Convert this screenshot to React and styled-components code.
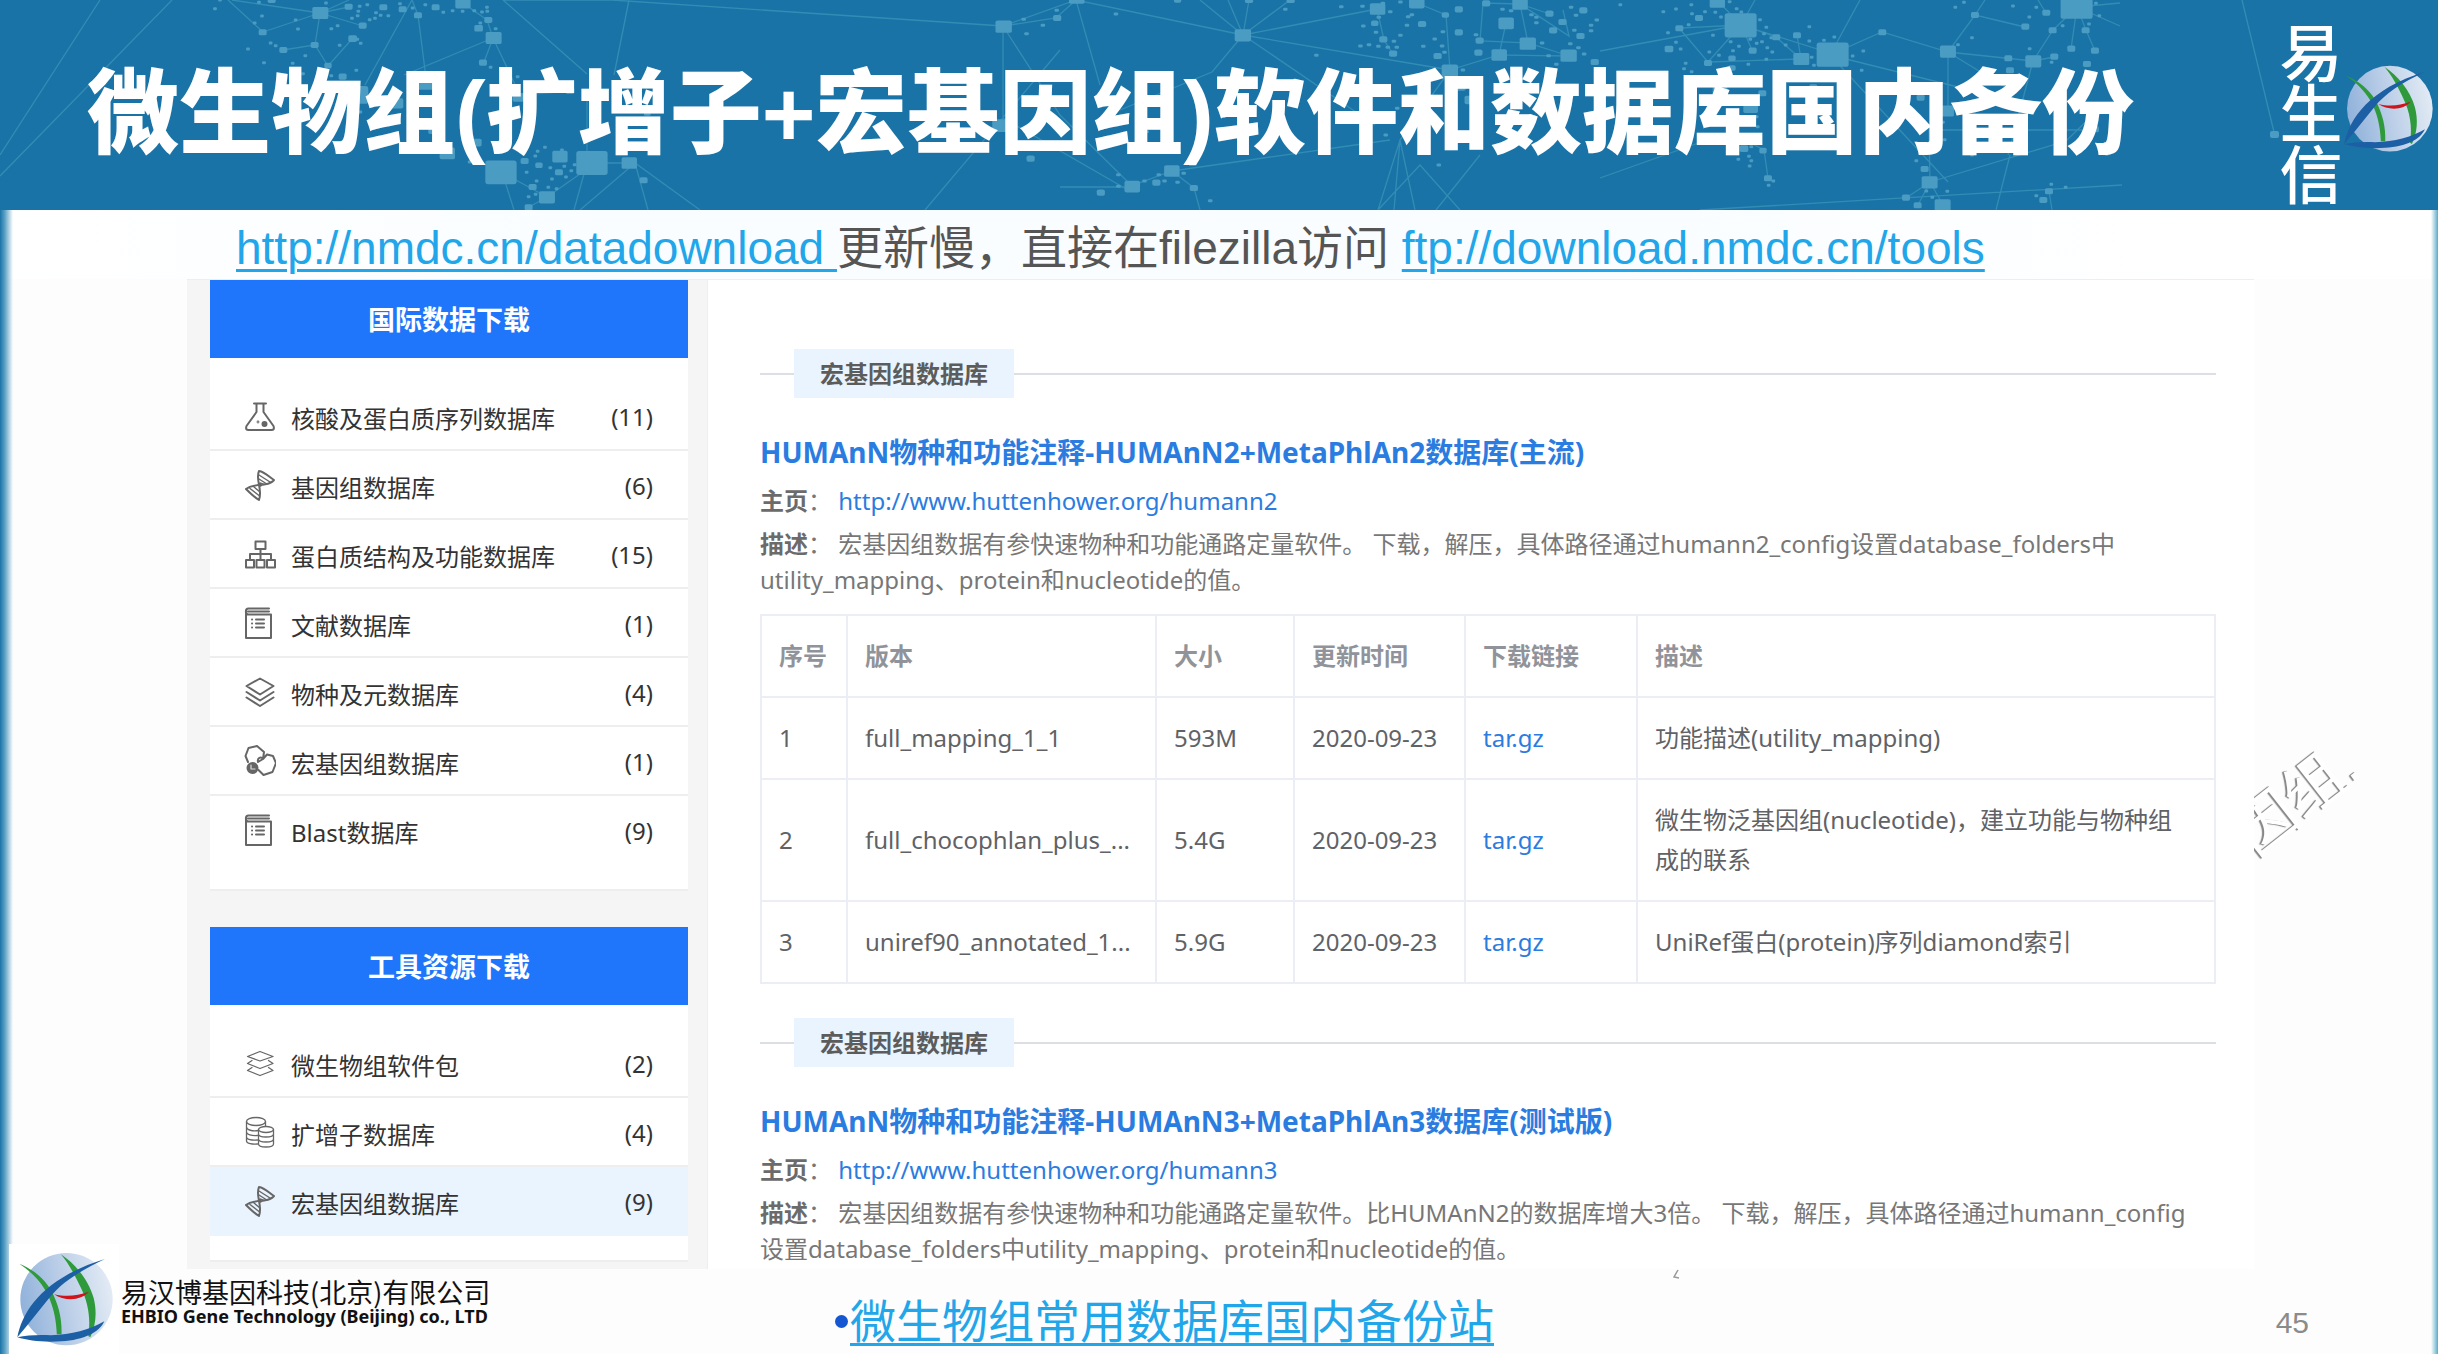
import React from "react";
import styled, { createGlobalStyle } from "styled-components";

const Global = createGlobalStyle`
  *, *::before, *::after { box-sizing: border-box; }
  body { margin: 0; background: #fff; }
  h1, h2, h3, p, ul { margin: 0; padding: 0; }
  ul { list-style: none; }
  a { text-decoration: none; }
`;

const web = `"Noto Sans", "Noto Sans CJK SC", sans-serif`;
const slideFont = `"Liberation Sans", "Noto Sans CJK SC", sans-serif`;

const Slide = styled.div`
  position: relative;
  display: flex;
  flex-direction: column;
  min-height: 100vh;
  font-family: ${slideFont};
  background:
    linear-gradient(90deg, #1a73a6 0, #5fa3c6 5px, #ffffff00 13px),
    linear-gradient(270deg, #5fa9c6 0, #9fd0e0 3px, #ffffff00 7px),
    linear-gradient(90deg, #fff 0, #f9fdff 26%, #f9fdff 66%, #fff 90%) 0 210px / 100% 69px no-repeat,
    #fdfdfe;
`;

const Header = styled.header`
  position: relative;
  display: flex;
  align-items: center;
  justify-content: space-between;
  height: 210px;
  padding: 0 5px 0 87px;
  overflow: hidden;
  background: #1a73a6;
`;

const Network = styled.svg`
  position: absolute;
  inset: 0;
  width: 100%;
  height: 100%;
`;

const Title = styled.h1`
  position: relative;
  color: #fff;
  font-size: 92px;
  line-height: 120px;
  font-weight: 900;
  white-space: nowrap;
  padding-top: 18px;
`;

const HeaderMark = styled.div`
  position: relative;
  display: flex;
  align-items: center;
  padding-top: 8px;
`;

const VerticalName = styled.p`
  width: 64px;
  padding-top: 12px;
  color: #fff;
  font-size: 63px;
  line-height: 61px;
  font-weight: 500;
  text-align: center;
`;

const Logo = styled.svg`
  display: block;
  flex: none;
  width: ${(p) => p.$size}px;
  height: ${(p) => p.$size}px;
`;

const Lead = styled.p`
  padding-left: 236px;
  height: 69px;
  color: #555;
  font-size: 46px;
  line-height: 76px;
  white-space: pre;
`;

const SlideLink = styled.a`
  color: #22a6ea;
  text-decoration: underline;
  text-decoration-thickness: 3px;
  text-underline-offset: 5px;
`;

const Page = styled.main`
  display: flex;
  margin: 0 184px 0 187px;
  background: #f5f5f5;
  border-top: 1px solid #eee;
  font-family: ${web};
`;

const Sidebar = styled.aside`
  display: flex;
  flex-direction: column;
  flex: none;
  gap: 36px;
  width: 521px;
  padding: 0 19px 7px 23px;
  border-right: 1px solid #eee;
`;

const Card = styled.nav`
  background: #fff;
  border-bottom: 2px solid #eee;
`;

const CardTitle = styled.h2`
  height: 78px;
  color: #fff;
  background: #1f76fb;
  font-size: 27px;
  line-height: 80px;
  font-weight: 700;
  text-align: center;
`;

const Menu = styled.ul`
  padding: 24px 0;
`;

const MenuItem = styled.li`
  border-bottom: 2px solid #eee;
  background: ${(p) => (p.$active ? "#e9f4fe" : "#fff")};
  &:last-child { border-bottom-color: transparent; }
`;

const MenuLink = styled.a`
  display: flex;
  align-items: center;
  height: 67px;
  padding: 0 35px 0 34px;
  color: #333;
  font-size: 24px;
`;

const MenuLabel = styled.span`
  flex: 1;
  padding: 4px 0 0 15px;
`;

const MenuCount = styled.span`
  padding-top: 2px;
`;

const Icon = styled.svg`
  width: 32px;
  height: 32px;
  fill: none;
  stroke: #666;
  stroke-width: ${(p) => p.$thin ? 1.3 : 2};
  stroke-linejoin: round;
  stroke-linecap: round;
`;

const Content = styled.div`
  flex: 1;
  min-width: 0;
  padding: 69px 38px 0 52px;
  background: #fff;
`;

const Section = styled.section`
  margin-bottom: 34px;
  &:last-child { margin-bottom: 0; }
`;

const Divider = styled.div`
  display: flex;
  align-items: center;
  &::before, &::after { content: ""; height: 2px; background: #dcdfe6; }
  &::before { width: 34px; }
  &::after { flex: 1; }
`;

const Tag = styled.span`
  padding: 0 26px;
  color: #5c5c5c;
  background: #e9f4fe;
  font-size: 24px;
  line-height: 49px;
  font-weight: 700;
`;

const Heading = styled.h3`
  margin-top: 34px;
  color: #2b7ce0;
  font-size: 28px;
  line-height: 40px;
  font-weight: 700;
`;

const Info = styled.p`
  margin-top: ${(p) => p.$gap}px;
  padding-right: 20px;
  color: #777;
  font-size: 24px;
  line-height: 36px;
`;

const Key = styled.b`
  color: #6b6b6b;
`;

const TextLink = styled.a`
  color: #2b7ce0;
`;

const Table = styled.table`
  width: 100%;
  margin-top: 16px;
  border-collapse: collapse;
  table-layout: fixed;
  color: #606266;
  font-size: 24px;
  line-height: 40px;
  th, td {
    padding: 20px 17px;
    border: 2px solid #ebeef5;
    text-align: left;
    font-weight: 400;
  }
  td:last-child { padding-right: 32px; }
  td:nth-child(2) { padding-right: 0; white-space: nowrap; }
  th { color: #909399; font-weight: 700; }
`;

const Col = styled.col`
  width: ${(p) => p.$w}px;
`;

const Footer = styled.footer`
  display: grid;
  grid-template-columns: 835px 1fr auto;
  align-items: center;
  flex: 1;
  min-height: 84px;
  padding-right: 129px;
`;

const Brand = styled.div`
  display: flex;
  align-items: center;
  align-self: end;
  width: 500px;
  height: 110px;
  margin: -26px 0 0 9px;
  padding-left: 7px;
  background: linear-gradient(90deg, #fff 0 110px, transparent 110px);
`;

const Company = styled.div`
  padding: 8px 0 0 8px;
  color: #111;
  white-space: nowrap;
`;

const CompanyCn = styled.p`
  font-size: 27px;
  line-height: 26px;
  font-weight: 400;
  font-family: "Noto Sans CJK SC", sans-serif;
`;

const CompanyEn = styled.p`
  font-family: "Noto Sans", sans-serif;
  font-size: 18px;
  line-height: 22px;
  font-weight: 700;
`;

const Source = styled.p`
  display: flex;
  align-items: center;
  font-size: 46px;
  line-height: 60px;
  padding-top: 20px;
`;

const Bullet = styled.span`
  width: 13px;
  height: 13px;
  margin-right: 2px;
  border-radius: 50%;
  background: #1557d0;
`;

const PageNumber = styled.span`
  padding-top: 22px;
  color: #8b8b8b;
  font-size: 30px;
  line-height: 34px;
`;

const Watermark = styled.div`
  position: absolute;
  top: 740px;
  right: 64px;
  width: 120px;
  height: 140px;
  overflow: hidden;
  span {
    position: absolute;
    right: 8px;
    top: 28px;
    color: #fff;
    font-size: 60px;
    line-height: 64px;
    white-space: nowrap;
    text-shadow: -2px -1px 1px #888, -1px -1px 0 #aaa;
    transform: rotate(-38deg);
  }
`;

const Speck = styled.svg`
  position: absolute;
  top: 1269px;
  left: 1673px;
  width: 10px;
  height: 10px;
`;

/* Nodes are [centre x, centre y, width]; every area has its own grid. */
const areas = [
  {
    t: "translate(140 0) scale(.3333)", r: 0.76,
    nodes: [[541,39,48],[368,97,24],[430,150,24],[524,135,24],[638,116,26],[668,77,24],[626,20,24],[730,22,24],[788,28,24],[834,46,24],[887,22,24],[969,8,46],[1045,60,24],[1016,85,26],[1061,114,48],[1029,188,24],[564,197,22],[608,230,24],[650,285,70],[770,310,40],[858,250,50],[1290,272,26],[1135,292,34],[922,460,46],[1010,428,30],[1083,517,94],[1154,483,24],[1197,496,22],[1260,470,46],[1356,489,94],[1257,517,24],[1468,489,46],[1511,541,24],[1178,561,24],[1221,592,48],[1166,622,24],[395,0,24],[878,392,26],[1522,340,20]],
    dots: [[225,26],[240,0],[324,147],[344,69],[366,48],[357,7],[392,129],[407,137],[372,188],[458,190],[467,60],[474,87],[574,86],[593,77],[636,55],[653,47],[655,34],[659,19],[682,14],[689,59],[705,55],[708,38],[722,46],[745,47],[652,118],[662,130],[599,136],[496,167],[558,9],[649,211],[574,227],[489,221],[780,11],[818,24],[856,14],[910,37],[938,32],[968,34],[1003,32],[1026,36],[1041,22],[1042,34],[1021,69],[1067,86],[1052,202],[1133,230],[1186,468],[1193,454],[1215,442],[1266,450],[1160,517],[1190,543],[1187,583],[1166,590],[1225,562],[1250,566],[1236,537],[1231,503],[1273,499],[1294,512],[1278,531],[1304,494],[989,486],[661,336],[643,348]],
  },
  {
    t: "translate(960 0) scale(.4082 .3333)", r: 0.92,
    nodes: [[107,80,40],[286,-6,38],[238,54,20],[693,106,40],[1023,27,38],[1119,8,38],[1189,45,18],[1222,28,20],[1289,10,20],[1372,12,38],[1444,41,20],[1338,70,38],[1476,66,20],[1527,31,20],[1016,70,18],[1132,72,20],[1037,118,20],[1061,161,20],[1222,97,20],[1273,122,20],[1270,158,20],[1321,165,38],[1391,131,40],[1453,91,20],[1520,108,20],[1491,167,40],[1555,186,20],[1170,168,20],[1200,212,40],[100,377,42],[173,476,20],[345,578,20],[422,560,38],[481,548,20],[519,513,38],[573,564,20],[570,489,20],[708,0,20],[533,0,18],[810,0,20],[1226,260,26],[1250,300,28]],
    dots: [[237,31],[156,58],[203,76],[163,101],[382,42],[797,28],[934,20],[986,19],[1036,10],[1054,35],[988,78],[1026,52],[1019,97],[981,138],[1002,134],[1025,139],[1048,142],[1070,142],[1063,124],[1079,106],[1098,50],[1107,44],[1095,76],[1079,6],[1135,139],[1163,117],[1181,138],[1183,95],[1187,157],[1264,104],[1329,28],[1350,32],[1400,44],[1412,52],[1412,68],[1426,129],[1442,167],[1497,22],[1509,46],[1546,76],[1546,92],[1560,60],[1505,91],[1515,143],[1495,131],[1529,162],[1461,193],[873,166],[613,602],[388,524],[388,559],[452,543],[501,543],[487,524],[533,547],[548,520],[1173,495],[1043,405],[1071,325],[457,395],[1232,210]],
  },
  {
    t: "translate(1600 0) scale(.3333)", r: 0.76,
    nodes: [[352,6,46],[297,54,24],[238,85,24],[422,76,96],[207,147,26],[324,189,24],[396,175,22],[396,204,22],[458,152,24],[529,112,24],[591,106,24],[604,177,48],[698,164,96],[847,97,24],[1044,155,48],[1125,45,24],[1276,80,24],[1339,38,24],[1358,91,24],[1430,20,96],[1457,91,24],[1414,146,24],[1485,152,24],[1461,192,24],[1300,184,48],[1363,170,24],[1225,175,24],[1230,211,24],[962,293,24],[1040,333,44],[452,322,44],[432,446,26],[504,535,24],[489,452,22],[974,507,24],[989,547,48],[918,593,24],[953,616,24],[1028,616,48],[1347,574,24],[1330,600,24],[1485,388,24],[487,280,24],[640,262,24],[360,270,44]],
    dots: [[61,14],[190,35],[228,27],[274,14],[276,41],[315,35],[346,37],[363,51],[389,5],[410,26],[424,36],[266,74],[204,98],[228,127],[242,147],[339,106],[392,125],[417,139],[399,152],[328,156],[357,166],[451,118],[470,130],[486,125],[502,143],[517,156],[499,178],[480,59],[499,82],[492,101],[514,113],[557,135],[628,80],[628,123],[672,121],[703,111],[642,196],[635,172],[758,168],[790,153],[785,211],[1066,22],[1092,7],[1116,113],[1074,134],[1239,18],[1288,51],[1309,22],[1289,146],[1355,187],[1388,77],[1467,72],[1498,47],[1488,10],[445,193],[257,190],[252,206],[275,215],[1029,367],[1034,419],[949,482],[1042,574],[997,592],[979,573],[1354,553],[1397,562],[1309,587],[415,478],[447,469],[454,482],[449,498],[454,440],[473,380],[470,350],[506,556],[520,543],[1520,463],[1116,465]],
  },
];

const lines = [
  "M100 0L0 155M172 0L0 176M228 0L263 32M320 13L263 32M320 13L232 0M320 13L349 7M320 13L315 45L283 50M320 13L363 26M320 13L349 0M315 45L328 66L352 39M418 15L412 0L365 85M493 38L404 75M493 38L484 62M493 38L520 95L571 91M503 0L587 74M629 0L614 75M503 0L612 0M418 15L426 78M463 3L487 20L493 38",
  "M612 0L1003 26L1076 0M1003 26L1056 18L1076 0M1003 26L1003 118L1128 190M1003 26L1060 115L1132 186M1076 0L1100 85M1076 0L1243 35M1060 50L925 210M1243 35L1200 0M1243 35L1228 0M1243 35L1249 0M1243 35L1290 0M1243 35L1377 9M1243 35L1212 72L1120 110M1243 35L1450 70M1243 35L1375 125M1377 9L1384 40L1393 54M1450 70L1446 15L1417 3M1450 70L1499 55L1569 56L1528 43L1480 41L1483 3L1520 4L1528 43M1520 4L1569 36L1563 10M1506 23L1499 55M1520 4L1550 14M1450 70L1400 140L1378 210M1400 140L1394 210M1400 140L1415 210M1460 210L1420 165L1378 210M1060 187L1128 187L1172 171L1194 188L1200 210M1172 171L1390 140M1480 155L1436 210",
  "M502 172L514 210M587 163L574 210M587 163L635 163L700 210M635 163L648 210M635 163L580 210M501 172L547 197L529 207M547 197L600 160M587 163L587 90",
  "M1741 25L1679 28L1708 62L1741 25M1741 25L1752 50M1741 25L1776 37L1801 59L1709 62M1741 25L1717 0M1741 25L1755 0M1741 25L1830 53M1797 35L1801 59M1600 51L1741 25M1830 55L1882 32L1948 52L1975 15L2025 27M1975 15L1985 0M1830 55L1860 0M1830 55L1948 182M1830 55L1990 95M1948 52L1948 110M1948 52L2033 61L2054 57M1948 52L2010 90M2077 7L2053 30L2033 61M2077 7L2086 30L2095 51M2077 7L2071 49M2077 7L2120 26M2077 7L2120 3M2046 13L2038 0M1600 178L1735 130M1735 135L1764 150L1768 178M1930 182L1906 198M1930 182L1918 205M1930 182L1943 205M1930 182L1929 130L2095 130M1930 182L2066 141L2098 110M2010 155L1996 210M1700 210L2122 185M2033 61L2008 155M2049 191L2052 210M2242 0L2274 132",
];

function NetworkArt() {
  return (
    <Network viewBox="0 0 2438 210" preserveAspectRatio="xMidYMid slice" aria-hidden="true">
      <g stroke="#3b96ba" strokeWidth="1.3" fill="none" opacity=".75">
        {lines.map((d) => <path key={d} d={d} />)}
      </g>
      <g fill="#4a9cc2">
        {areas.map((a) => (
          <g key={a.t} transform={a.t}>
            {a.nodes.map(([x, y, w], i) => (
              <rect key={i} x={x - w / 2} y={y - (w * a.r) / 2} width={w} height={w * a.r} rx={w > 60 ? 8 : 5} />
            ))}
            {a.dots.map(([x, y], i) => (
              <rect key={i} x={x - 5.5} y={y - 4.5} width="11" height="9" rx="3" />
            ))}
          </g>
        ))}
        <rect x="2270" y="131" width="9" height="7" rx="2" />
      </g>
    </Network>
  );
}

function Globe({ size, id, wedge }) {
  return (
    <Logo $size={size} viewBox="46 96 290 290" role="img" aria-label="EHBIO">
      <defs>
        <linearGradient id={id} x1="0" y1=".6" x2="1" y2=".4">
          <stop offset="0" stopColor="#8fb1da" />
          <stop offset=".5" stopColor="#bccfe8" />
          <stop offset="1" stopColor="#e3ebf5" />
        </linearGradient>
      </defs>
      <circle cx="197" cy="240" r="138" fill={`url(#${id})`} />
      {wedge && <path d="M52 353L72 326L106 347Z" fill="#fff" />}
      <path d="M56 134C96 150 130 178 150 212C174 256 184 300 182 345L168 345C166 296 156 252 134 214C114 180 88 156 56 134Z" fill="#2f9a3b" />
      <path d="M180 106C222 134 262 180 278 236C288 276 286 316 268 354L262 350C270 300 262 250 240 206C224 172 204 134 180 106Z" fill="#2f9a3b" />
      <path d="M160 225C196 234 228 230 264 218C240 246 190 246 160 225Z" fill="#d0141c" />
      <path d="M50 354C66 272 130 176 312 120C236 156 182 190 146 236C112 278 82 316 50 354Z" fill="#1d5fa4" />
      <path d="M50 354C80 348 110 346 150 348C212 346 266 332 310 306C296 338 250 362 182 366C128 370 84 364 50 354Z" fill="#1d5fa4" />
    </Logo>
  );
}

const icons = {
  flask: (
    <>
      <path d="M10 3.500h12M12.500 4v8L2.500 26c-1 3 0 4 2 4h23c2 0 3-1 2-4L19.500 12V4" />
      <circle cx="20.500" cy="24" r="2" fill="#666" />
      <circle cx="14" cy="22" r=".4" />
    </>
  ),
  dna: (
    <>
      <path d="M15 2c-4 9 4 18 0 29M15 2c6 1 10 6 15 9-5 6-10 3-14 6M2 20c6-5 9-2 14-5M2 20c4 4 8 8 13 11" />
      <path d="M15 6l11 7M15 10l7 4.500M6 19.500l9 7M10 18l6 5M16 14l4 1.500" strokeWidth="1.400" />
    </>
  ),
  sitemap: (
    <path d="M11.500 3.500h10v7.500h-10zM2 22h8v7.500H2zM12.500 22h8v7.500h-8zM23 22h8v7.500h-8zM16.500 11v11M6 22v-6h21v6" />
  ),
  book: (
    <>
      <path d="M25 1.500H4.500C1 1.500 1 7.500 4.500 7.500H27V31H2V4.500M4 4.500h21" />
      <path d="M12 12.500h8M12 16.500h8M12 20.500h8M8 12.500h.1M8 16.500h.1M8 20.500h.1" />
    </>
  ),
  layers: (
    <path d="M16 2.500L29.500 10 16 18.500 2.500 10zM2.500 16L16 24.500 29.500 16M2.500 21.500L16 30 29.500 21.500" />
  ),
  hexagons: (
    <>
      <path d="M4 17L1.500 11l3-8L13 1l7 6-1 7-5 3M14 17c-1-4 3-6 5-3l4-4.500 6 1.500 3 7-3.500 9-9 3-5-5" />
      <circle cx="8.500" cy="23" r="5" fill="#666" />
      <path d="M7 20v4h4" stroke="#ddd" strokeWidth="1.200" />
    </>
  ),
  stack: (
    <path d="M16 4.500L29 9.500 16 14 3.500 9.500zM8 13.500l-4.500 3L16 21.500l13-5-4.500-3M8 20.500l-4.500 3L16 28.500l13-5-4.500-3" />
  ),
  coins: (
    <>
      <ellipse cx="12" cy="5.500" rx="9.500" ry="4" />
      <path d="M2.500 5.500V25c0 2.500 6 3.500 11 3M21.500 5.500V10M2.500 11c0 3 6 4.500 12 3.500M2.500 16c0 2.500 5 4 11 3.500M2.500 21c0 2.500 5 3.500 11 3" />
      <ellipse cx="22" cy="13.500" rx="7.500" ry="3" />
      <path d="M14.500 13.500V28c0 4 15 4 15 0V13.500M14.500 18c0 4 15 4 15 0M14.500 23c0 4 15 4 15 0" />
    </>
  ),
};

const groups = [
  {
    title: "国际数据下载",
    items: [
      ["flask", "核酸及蛋白质序列数据库", 11],
      ["dna", "基因组数据库", 6],
      ["sitemap", "蛋白质结构及功能数据库", 15],
      ["book", "文献数据库", 1],
      ["layers", "物种及元数据库", 4],
      ["hexagons", "宏基因组数据库", 1],
      ["book", "Blast数据库", 9],
    ],
  },
  {
    title: "工具资源下载",
    items: [
      ["stack", "微生物组软件包", 2],
      ["coins", "扩增子数据库", 4],
      ["dna", "宏基因组数据库", 9, true],
    ],
  },
];

const rows = [
  ["1", "full_mapping_1_1", "593M", "2020-09-23", "功能描述(utility_mapping)"],
  ["2", "full_chocophlan_plus_...", "5.4G", "2020-09-23", "微生物泛基因组(nucleotide)，建立功能与物种组成的联系"],
  ["3", "uniref90_annotated_1...", "5.9G", "2020-09-23", "UniRef蛋白(protein)序列diamond索引"],
];

function Resource({ title, url, text, children }) {
  return (
    <Section>
      <Divider><Tag>宏基因组数据库</Tag></Divider>
      <Heading>{title}</Heading>
      <Info $gap={11}><Key>主页</Key>： <TextLink href={url}>{url}</TextLink></Info>
      <Info $gap={7}><Key>描述</Key>： {text}</Info>
      {children}
    </Section>
  );
}

export default function App() {
  return (
    <Slide lang="zh-CN">
      <Global />
      <Header>
        <NetworkArt />
        <Title>微生物组(扩增子+宏基因组)软件和数据库国内备份</Title>
        <HeaderMark>
          <VerticalName>易生信</VerticalName>
          <Globe size={90} id="globeTop" />
        </HeaderMark>
      </Header>
      <Lead>
        <SlideLink href="http://nmdc.cn/datadownload">{"http://nmdc.cn/datadownload "}</SlideLink>
        {"更新慢，直接在filezilla访问 "}
        <SlideLink href="ftp://download.nmdc.cn/tools">ftp://download.nmdc.cn/tools</SlideLink>
      </Lead>
      <Page>
        <Sidebar>
          {groups.map((g) => (
            <Card key={g.title} aria-label={g.title}>
              <CardTitle>{g.title}</CardTitle>
              <Menu>
                {g.items.map(([icon, label, count, active]) => (
                  <MenuItem key={label} $active={active}>
                    <MenuLink href="#">
                      <Icon viewBox="0 0 32 32" $thin={icon === "stack" || icon === "coins"} aria-hidden="true">{icons[icon]}</Icon>
                      <MenuLabel>{label}</MenuLabel>
                      <MenuCount>({count})</MenuCount>
                    </MenuLink>
                  </MenuItem>
                ))}
              </Menu>
            </Card>
          ))}
        </Sidebar>
        <Content>
          <Resource
            title="HUMAnN物种和功能注释-HUMAnN2+MetaPhlAn2数据库(主流)"
            url="http://www.huttenhower.org/humann2"
            text="宏基因组数据有参快速物种和功能通路定量软件。 下载，解压，具体路径通过humann2_config设置database_folders中utility_mapping、protein和nucleotide的值。"
          >
            <Table>
              <colgroup>
                <Col $w={86} /><Col $w={309} /><Col $w={138} /><Col $w={171} /><Col $w={172} /><col />
              </colgroup>
              <thead>
                <tr><th>序号</th><th>版本</th><th>大小</th><th>更新时间</th><th>下载链接</th><th>描述</th></tr>
              </thead>
              <tbody>
                {rows.map(([n, version, size, date, text]) => (
                  <tr key={n}>
                    <td>{n}</td>
                    <td>{version}</td>
                    <td>{size}</td>
                    <td>{date}</td>
                    <td><TextLink href="#">tar.gz</TextLink></td>
                    <td>{text}</td>
                  </tr>
                ))}
              </tbody>
            </Table>
          </Resource>
          <Resource
            title="HUMAnN物种和功能注释-HUMAnN3+MetaPhlAn3数据库(测试版)"
            url="http://www.huttenhower.org/humann3"
            text="宏基因组数据有参快速物种和功能通路定量软件。比HUMAnN2的数据库增大3倍。 下载，解压，具体路径通过humann_config设置database_folders中utility_mapping、protein和nucleotide的值。"
          />
        </Content>
      </Page>
      <Footer>
        <Brand>
          <Globe size={97} id="globeBottom" wedge />
          <Company>
            <CompanyCn>易汉博基因科技(北京)有限公司</CompanyCn>
            <CompanyEn>EHBIO Gene Technology (Beijing) co., LTD</CompanyEn>
          </Company>
        </Brand>
        <Source>
          <Bullet />
          <SlideLink href="#">微生物组常用数据库国内备份站</SlideLink>
        </Source>
        <PageNumber>45</PageNumber>
      </Footer>
      <Watermark aria-hidden="true"><span>因组.</span></Watermark>
      <Speck viewBox="0 0 10 10" aria-hidden="true"><path d="M5 1L1 8L6 9" fill="none" stroke="#999" strokeWidth="1.500" /></Speck>
    </Slide>
  );
}
